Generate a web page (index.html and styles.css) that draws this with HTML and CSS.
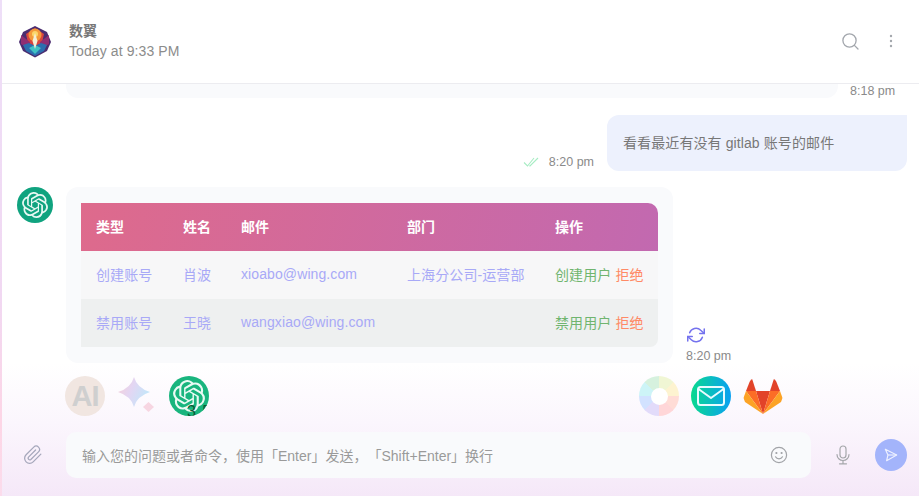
FILE: index.html
```html
<!DOCTYPE html>
<html lang="zh-CN">
<head>
    <meta charset="UTF-8">
    <meta name="viewport" content="width=device-width, initial-scale=1.0">
    <title>数翼</title>
    <link rel="stylesheet" href="styles.css">
</head>
<body>
    <svg class="defs" width="0" height="0">
        <symbol id="gpt" viewBox="0 0 24 24">
            <path fill="currentColor" d="M22.2819 9.8211a5.9847 5.9847 0 0 0-.5157-4.9108 6.0462 6.0462 0 0 0-6.5098-2.9A6.0651 6.0651 0 0 0 4.9807 4.1818a5.9847 5.9847 0 0 0-3.9977 2.9 6.0462 6.0462 0 0 0 .7427 7.0966 5.98 5.98 0 0 0 .511 4.9107 6.051 6.051 0 0 0 6.5146 2.9001A5.9847 5.9847 0 0 0 13.2599 24a6.0557 6.0557 0 0 0 5.7718-4.2058 5.9894 5.9894 0 0 0 3.9977-2.9001 6.0557 6.0557 0 0 0-.7475-7.0729zm-9.022 12.6081a4.4755 4.4755 0 0 1-2.8764-1.0408l.1419-.0804 4.7783-2.7582a.7948.7948 0 0 0 .3927-.6813v-6.7369l2.02 1.1686a.071.071 0 0 1 .038.052v5.5826a4.504 4.504 0 0 1-4.4945 4.4944zm-9.6607-4.1254a4.4708 4.4708 0 0 1-.5346-3.0137l.142.0852 4.783 2.7582a.7712.7712 0 0 0 .7806 0l5.8428-3.3685v2.3324a.0804.0804 0 0 1-.0332.0615L9.74 19.9502a4.4992 4.4992 0 0 1-6.1408-1.6464zM2.3408 7.8956a4.485 4.485 0 0 1 2.3655-1.9728V11.6a.7664.7664 0 0 0 .3879.6765l5.8144 3.3543-2.0201 1.1685a.0757.0757 0 0 1-.071 0l-4.8303-2.7865A4.504 4.504 0 0 1 2.3408 7.872zm16.5963 3.8558L13.1038 8.364 15.1192 7.2a.0757.0757 0 0 1 .071 0l4.8303 2.7913a4.4944 4.4944 0 0 1-.6765 8.1042v-5.6772a.79.79 0 0 0-.407-.667zm2.0107-3.0231l-.142-.0852-4.7735-2.7818a.7759.7759 0 0 0-.7854 0L9.409 9.2297V6.8974a.0662.0662 0 0 1 .0284-.0615l4.8303-2.7866a4.4992 4.4992 0 0 1 6.6802 4.66zM8.3065 12.863l-2.02-1.1638a.0804.0804 0 0 1-.038-.0567V6.0742a4.4992 4.4992 0 0 1 7.3757-3.4537l-.142.0805L8.704 5.459a.7948.7948 0 0 0-.3927.6813zm1.0976-2.3654l2.602-1.4998 2.6069 1.4998v2.9994l-2.5974 1.4997-2.6067-1.4997Z"/>
        </symbol>
    </svg>

    <div class="app">
        <!-- Header -->
        <header class="top-bar">
            <svg class="logo" width="36" height="36" viewBox="0 0 36 36">
                <polygon points="18,2 30,8 34,18 30,27 18,33.5 6,27 2,18 6,8" fill="#4b2d70"/>
                <polygon points="18,4 27,10 25,19 18,22 11,19 9,10" fill="#d8453f"/>
                <circle cx="18" cy="11" r="6.5" fill="#f49a3a"/>
                <circle cx="18" cy="10" r="3" fill="#fbd76b"/>
                <path d="M4 11 L13 18 L12 25 L4 20Z" fill="#8f2f72"/>
                <path d="M32 11 L23 18 L24 25 L32 20Z" fill="#8f2f72"/>
                <path d="M6 21 L12 19 L18 22 L24 19 L30 21 L27 27 L18 32 L9 27Z" fill="#2c6fae"/>
                <path d="M12 24 L18 21 L24 24 L18 30Z" fill="#3fc2c4"/>
                <polygon points="18,9 20.5,17 18,25 15.5,17" fill="#f4efd6"/>
            </svg>
            <div class="top-text">
                <div class="top-name">数翼</div>
                <div class="top-sub">Today at 9:33 PM</div>
            </div>
            <svg class="search-icon" width="18" height="18" viewBox="0 0 18 18" fill="none" stroke="#a3a7ad" stroke-width="1.3" stroke-linecap="round">
                <circle cx="7.5" cy="7.5" r="6.6"/>
                <path d="M12.4 12.4 L16 16"/>
            </svg>
            <svg class="more-icon" width="4" height="14" viewBox="0 0 4 14" fill="#a3a7ad">
                <circle cx="2" cy="2" r="1.2"/>
                <circle cx="2" cy="7" r="1.2"/>
                <circle cx="2" cy="12" r="1.2"/>
            </svg>
        </header>

        <!-- Messages -->
        <main class="messages">
            <div class="row-old">
                <div class="old-bubble"></div>
                <span class="time">8:18 pm</span>
            </div>

            <div class="row-user">
                <svg class="ticks" width="16" height="12" viewBox="0 0 16 12" fill="none" stroke="#a8ecc4" stroke-width="1.1">
                    <path d="M1 6.5 L4.5 10 L11 2"/>
                    <path d="M6.5 9.5 L7 10 L15 2"/>
                </svg>
                <span class="time">8:20 pm</span>
                <div class="user-bubble">看看最近有没有 gitlab 账号的邮件</div>
            </div>

            <div class="row-bot">
                <div class="bot-avatar"><svg width="26" height="26"><use href="#gpt"/></svg></div>
                <div class="bot-bubble">
                    <table class="mail-table">
                        <thead>
                            <tr>
                                <th class="col-type">类型</th>
                                <th class="col-name">姓名</th>
                                <th class="col-mail">邮件</th>
                                <th class="col-dept">部门</th>
                                <th>操作</th>
                            </tr>
                        </thead>
                        <tbody>
                            <tr>
                                <td>创建账号</td>
                                <td>肖波</td>
                                <td>xioabo@wing.com</td>
                                <td>上海分公司-运营部</td>
                                <td><span class="ok">创建用户</span> <span class="no">拒绝</span></td>
                            </tr>
                            <tr>
                                <td>禁用账号</td>
                                <td>王晓</td>
                                <td>wangxiao@wing.com</td>
                                <td></td>
                                <td><span class="ok">禁用用户</span> <span class="no">拒绝</span></td>
                            </tr>
                        </tbody>
                    </table>
                </div>
                <div class="bot-side">
                    <svg width="18" height="18" viewBox="0 0 24 24" fill="none" stroke="#7472ee" stroke-width="2" stroke-linecap="round" stroke-linejoin="round">
                        <path d="M23 4v6h-6"/>
                        <path d="M1 20v-6h6"/>
                        <path d="M3.5 9a9 9 0 0 1 14.8-3.4L23 10"/>
                        <path d="M1 14l4.7 4.4A9 9 0 0 0 20.5 15"/>
                    </svg>
                    <span class="time">8:20 pm</span>
                </div>
            </div>
        </main>

        <!-- Footer -->
        <footer class="bottom">
            <div class="models">
                <div class="model-group">
                    <div class="model model-claude">AI</div>
                    <div class="model model-gemini">
                        <svg width="40" height="40" viewBox="0 0 40 40">
                            <defs>
                                <linearGradient id="gem" x1="0" y1="0" x2="1" y2="0.4">
                                    <stop offset="0" stop-color="#f8cfd6"/>
                                    <stop offset="0.5" stop-color="#e3d6f3"/>
                                    <stop offset="1" stop-color="#c4e6f9"/>
                                </linearGradient>
                            </defs>
                            <path d="M19 1 Q22 12 35 16 Q22 20 19 31 Q16 20 3 16 Q16 12 19 1Z" fill="url(#gem)"/>
                            <path d="M33.5 26 L39 31 L33.5 36 L28 31Z" fill="#f7d6e2"/>
                        </svg>
                    </div>
                    <div class="model model-gpt">
                        <svg width="32" height="32"><use href="#gpt"/></svg>
                        <span class="model-tag">3.5</span>
                    </div>
                </div>
                <div class="model-group">
                    <div class="model model-wheel"><span></span></div>
                    <div class="model model-mail">
                        <svg width="28" height="20" viewBox="0 0 28 20" fill="none" stroke="#e8fbff" stroke-width="2" stroke-linejoin="round">
                            <rect x="1" y="1" width="26" height="18" rx="2.5"/>
                            <path d="M1.5 3 L14 12 L26.5 3"/>
                        </svg>
                    </div>
                    <svg class="model" viewBox="0 0 40 40">
                        <polygon points="20,38 13,15 27,15" fill="#e24329"/>
                        <polygon points="20,38 13,15 3,15" fill="#fc6d26"/>
                        <polygon points="20,38 27,15 37,15" fill="#fc6d26"/>
                        <polygon points="3,15 0.5,22 2,26 20,38" fill="#fca326"/>
                        <polygon points="37,15 39.5,22 38,26 20,38" fill="#fca326"/>
                        <polygon points="3,15 13,15 8.5,1" fill="#e24329"/>
                        <polygon points="37,15 27,15 31.5,1" fill="#e24329"/>
                    </svg>
                </div>
            </div>
            <div class="input-row">
                <svg class="clip" width="20" height="20" viewBox="0 0 24 24" fill="none" stroke="#a5a7bb" stroke-width="1.5" stroke-linecap="round" stroke-linejoin="round">
                    <path d="M21.4 11 L12.2 20.2 a6 6 0 0 1-8.5-8.5 L12.9 2.5 a4 4 0 0 1 5.7 5.7 L9.4 17.4 a2 2 0 0 1-2.8-2.8 L15.1 6"/>
                </svg>
                <div class="input-box">
                    <span class="placeholder">输入您的问题或者命令，使用「Enter」发送，「Shift+Enter」换行</span>
                    <svg width="18" height="18" viewBox="0 0 18 18" fill="none" stroke="#a2a4a8" stroke-width="1.2" stroke-linecap="round">
                        <circle cx="9" cy="9" r="7.6"/>
                        <circle cx="6.4" cy="7" r=".5" fill="#a2a4a8"/>
                        <circle cx="11.6" cy="7" r=".5" fill="#a2a4a8"/>
                        <path d="M5.5 10.8 a4 4 0 0 0 7 0"/>
                    </svg>
                </div>
                <svg class="mic" width="14" height="20" viewBox="0 0 14 20" fill="none" stroke="#a5a7ab" stroke-width="1.2" stroke-linecap="round">
                    <rect x="4" y="1" width="6" height="12" rx="3"/>
                    <path d="M1 9.5 a6 6 0 0 0 12 0"/>
                    <path d="M7 15.5 V18.5 M3.5 18.8 H10.5"/>
                </svg>
                <div class="send">
                    <svg width="14" height="14" viewBox="0 0 16 16" fill="none" stroke="#eef1ff" stroke-width="1.3" stroke-linejoin="round">
                        <path d="M1.5 1.5 L14.5 8 L3 14.5 L4.5 8 Z"/>
                        <path d="M4.5 8 H14.5"/>
                    </svg>
                </div>
            </div>
        </footer>
    </div>
</body>
</html>
```

FILE: styles.css
```css
* {
    box-sizing: border-box;
}

html, body {
    margin: 0;
    padding: 0;
    height: 100%;
}

body {
    font-family: "Liberation Sans", "Noto Sans CJK SC", sans-serif;
    font-size: 14px;
    letter-spacing: 0.1px;
    color: #777;
    background: #fff;
    overflow: hidden;
}

.defs {
    position: absolute;
}

.app {
    display: flex;
    flex-direction: column;
    height: 100vh;
    border-left: 2px solid;
    border-image: linear-gradient(180deg, #eedff8, #f1d8f2 60%, #fdd6e6 85%, #fbdcec) 1;
}

/* header */
.top-bar {
    display: flex;
    align-items: center;
    height: 84px;
    flex-shrink: 0;
    padding: 0 26px 0 15px;
    border-bottom: 1px solid #ececf0;
}

.logo {
    flex-shrink: 0;
}

.top-text {
    flex-grow: 1;
    margin: 0 0 1px 16px;
}

.top-name {
    font-size: 14px;
    font-weight: bold;
    line-height: 20px;
    color: #777;
}

.top-sub {
    font-size: 14px;
    line-height: 20px;
    color: #8c8c8c;
}

.more-icon {
    margin: 0 0 2px 29px;
}

/* messages */
.messages {
    flex-grow: 1;
    display: flex;
    flex-direction: column;
    gap: 17px;
    padding-right: 12px;
    overflow: hidden;
}

.time {
    font-size: 12.5px;
    letter-spacing: 0;
    color: #8a8a8a;
    white-space: nowrap;
}

.row-old {
    display: flex;
    height: 14px;
    padding-left: 64px;
}

.old-bubble {
    width: 772px;
    background-color: #f9fafc;
    border-radius: 0 0 12px 12px;
}

.row-old .time {
    margin: 0 0 0 12px;
    line-height: 14px;
}

.row-user {
    display: flex;
    justify-content: flex-end;
    align-items: flex-end;
}

.ticks {
    margin-bottom: 3px;
}

.row-user .time {
    margin: 0 13px 2px 10px;
    line-height: 14px;
}

.user-bubble {
    width: 300px;
    height: 56px;
    padding: 0 16px;
    line-height: 56px;
    background-color: #edf1fd;
    border-radius: 12px 0 12px 12px;
    white-space: nowrap;
}

.row-bot {
    display: flex;
    align-items: flex-start;
    margin-top: -1px;
    padding-left: 15px;
}

.bot-avatar {
    display: flex;
    align-items: center;
    justify-content: center;
    width: 36px;
    height: 36px;
    border-radius: 50%;
    background-color: #10a37f;
    color: #e8f8f3;
}

.bot-bubble {
    width: 607px;
    margin-left: 13px;
    padding: 16px 15px;
    background-color: #f9fafc;
    border-radius: 12px;
}

.mail-table {
    width: 577px;
    border-collapse: collapse;
    table-layout: fixed;
}

.mail-table th, .mail-table td {
    height: 48px;
    padding: 0 0 2px 15px;
    text-align: left;
    white-space: nowrap;
}

.mail-table thead tr {
    background: linear-gradient(100deg, #de6a8c, #c269b0);
}

.mail-table th {
    color: #fff;
    font-weight: bold;
    font-size: 14px;
}

.mail-table th:last-child {
    border-top-right-radius: 10px;
}

.mail-table td {
    color: #a8a9f7;
}

.mail-table tbody tr:nth-child(1) {
    background-color: #f7f7f8;
}

.mail-table tbody tr:nth-child(2) {
    background-color: #eef0f0;
}

.mail-table tbody tr:nth-child(2) td:last-child {
    border-bottom-right-radius: 8px;
}

.col-type { width: 87px; }
.col-name { width: 58px; }
.col-mail { width: 166px; }
.col-dept { width: 148px; }

.mail-table .ok {
    color: #70b56f;
}

.mail-table .no {
    color: #ff8a66;
}

.bot-side {
    display: flex;
    flex-direction: column;
    align-self: flex-end;
    gap: 5px;
    margin-left: 13px;
}

.bot-side svg {
    margin-left: 1px;
}

.bot-side .time {
    line-height: 14px;
}

/* footer */
.bottom {
    flex-shrink: 0;
    padding: 13px 12px 18px 0;
    background: linear-gradient(180deg, #fff 0%, #fbf6fd 45%, #f5e8f8 100%);
}

.models {
    display: flex;
    justify-content: space-between;
    padding: 0 124px 0 63px;
}

.model-group {
    display: flex;
    gap: 12px;
}

.model {
    display: flex;
    align-items: center;
    justify-content: center;
    width: 40px;
    height: 40px;
    flex-shrink: 0;
    border-radius: 50%;
    overflow: hidden;
}

.model-claude {
    background-color: #f1e6e1;
    color: #cfcfcf;
    font-size: 29px;
    font-weight: bold;
    letter-spacing: -1px;
}

.model-gemini {
    overflow: visible;
    margin: 0 2px 0 -2px;
}

.model-gpt {
    position: relative;
    background-color: #19b57e;
    color: #eafaf4;
}

.model-tag {
    position: absolute;
    left: 18px;
    top: 26px;
    font-size: 16px;
    line-height: 20px;
    letter-spacing: 1px;
    color: #0b5a34;
}

.model-wheel {
    background: conic-gradient(#f0f6d4 0 45deg, #fdf3d0 45deg 90deg, #ffdcd6 90deg 135deg, #ffd6d8 135deg 180deg, #e2dbfa 180deg 225deg, #d2e2ff 225deg 270deg, #cdf4f7 270deg 315deg, #d6f1de 315deg 360deg);
}

.model-wheel span {
    width: 17px;
    height: 17px;
    border-radius: 50%;
    background-color: #fff;
}

.model-mail {
    background: linear-gradient(90deg, #0ad98f, #0aa0f2);
}

.input-row {
    display: flex;
    align-items: center;
    margin-top: 16px;
    height: 46px;
}

.clip {
    margin: 0 23px 0 21px;
}

.input-box {
    display: flex;
    align-items: center;
    justify-content: space-between;
    width: 745px;
    height: 46px;
    padding: 0 23px 0 16px;
    background-color: #f9fafc;
    border-radius: 10px;
}

.placeholder {
    font-size: 14px;
    letter-spacing: 0;
    text-spacing-trim: space-all;
    color: #9a9a9a;
}

.mic {
    margin-left: 25px;
}

.send {
    display: flex;
    align-items: center;
    justify-content: center;
    width: 32px;
    height: 32px;
    margin-left: 25px;
    border-radius: 50%;
    background-color: #a3b4fb;
}
```
